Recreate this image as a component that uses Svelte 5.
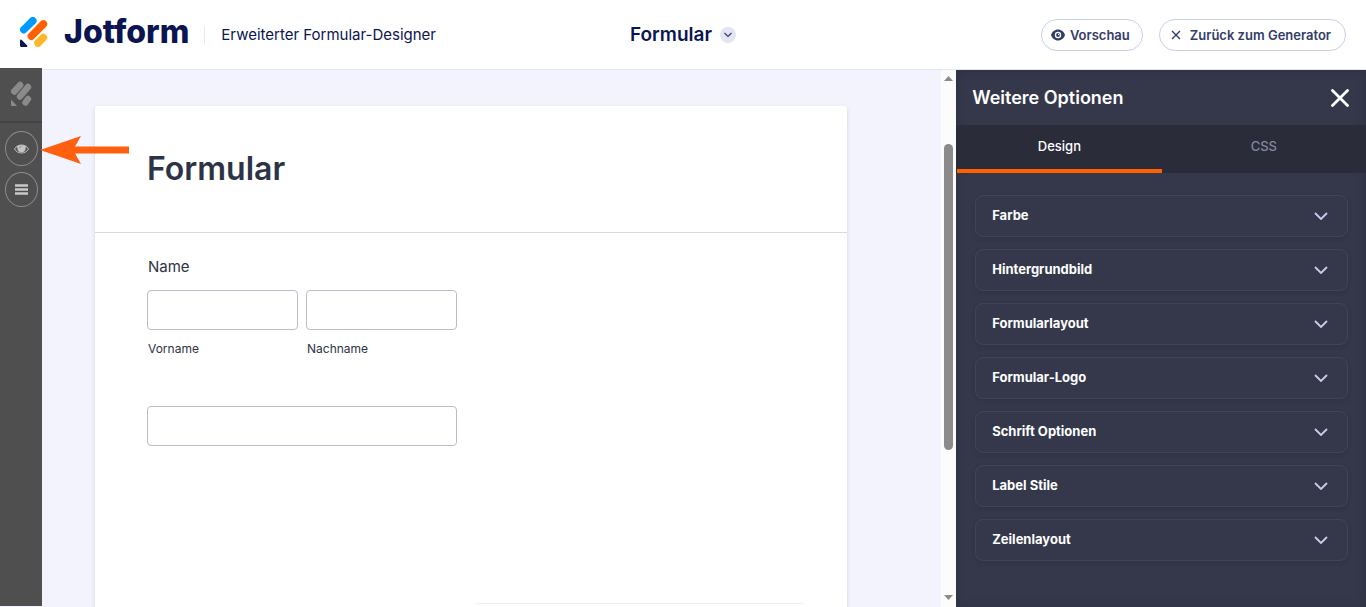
<script lang="ts">
  let activeTab = $state("design");
  let openSection = $state("");
  let firstName = $state("");
  let lastName = $state("");
  let answer = $state("");

  const tabs = [
    { id: "design", label: "Design" },
    { id: "css", label: "CSS" },
  ];

  const sections = [
    "Farbe",
    "Hintergrundbild",
    "Formularlayout",
    "Formular-Logo",
    "Schrift Optionen",
    "Label Stile",
    "Zeilenlayout",
  ];

  const toggleSection = (name: string) => {
    openSection = openSection === name ? "" : name;
  };
</script>

<div class="page">
  <header class="topbar">
    <div class="brand">
      <a class="logo" href="/" aria-label="Jotform">
        <svg width="28" height="30" viewBox="0 0 28 30">
          <g fill="none" stroke-width="7.6" stroke-linecap="round">
            <path d="M3.800 12.600L12.800 3.800" stroke="#0099ff" />
            <path d="M11.400 19.200L23.400 7" stroke="#ff6100" />
            <path d="M18 26L23.400 20.600" stroke="#ffb629" />
          </g>
          <path d="M0 23.500c0-1 .9-1.300 1.500-.7L7.200 28.500c.6.600.2 1.500-.7 1.500H1.500C.6 30 0 29.400 0 28.500z" fill="#0a1551" />
        </svg>
        <span class="wordmark">Jotform</span>
      </a>
      <span class="product">Erweiterter Formular-Designer</span>
    </div>

    <div class="form-name">
      <span>Formular</span>
      <button class="name-toggle" aria-label="Formular wählen">
        <svg width="8" height="6" viewBox="0 0 8 6"><path d="M0.500 1L4 4.500 7.500 1" /></svg>
      </button>
    </div>

    <div class="actions">
      <button class="pill">
        <svg width="14" height="12" viewBox="0 0 14 12">
          <path d="M7 0.500C3.600.5 1.100 2.800 0 6c1.100 3.200 3.600 5.500 7 5.500S12.900 9.200 14 6C12.900 2.800 10.400.5 7 .5z" fill="#343c6a" />
          <circle cx="7" cy="6" r="3.200" fill="#fff" />
          <circle cx="7" cy="6" r="1.900" fill="#343c6a" />
          <circle cx="7.600" cy="5.400" r="0.700" fill="#fff" />
        </svg>
        Vorschau
      </button>
      <button class="pill back">
        <svg width="10" height="10" viewBox="0 0 10 10">
          <path d="M1 1l8 8M9 1L1 9" stroke="#343c6a" stroke-width="1.400" />
        </svg>
        Zurück zum Generator
      </button>
    </div>
  </header>

  <div class="workspace">
    <nav class="rail">
      <a class="rail-logo" href="/" aria-label="Start">
        <svg width="22" height="26" viewBox="0 0 22 26">
          <g fill="none" stroke="#8a8a8a" stroke-width="6.400" stroke-linecap="round">
            <path d="M4.200 10.500L10.200 4" />
            <path d="M10 15.500L18 6" />
            <path d="M15.500 21.500L18 18" />
          </g>
          <path d="M1 18.500l6 6.500H2a1 1 0 0 1-1-1z" fill="#8a8a8a" />
        </svg>
      </a>
      <div class="rail-tools">
        <button class="rail-button" aria-label="Vorschau">
          <svg width="15" height="10" viewBox="0 0 15 10">
            <path d="M0.500 5C3.500 -0.300 11.500 -0.300 14.500 5 11.500 10.300 3.500 10.300 0.500 5z" fill="none" stroke="#c4c4c4" />
            <path d="M3.200 2.200Q7.500 0 11.800 2.200 12 8.200 7.500 8.200 3 8.200 3.200 2.200z" fill="#c4c4c4" />
            <path d="M5.500 4Q6 2.600 7.500 2.500" fill="none" stroke="#777" stroke-width="0.800" />
          </svg>
        </button>
        <button class="rail-button" aria-label="Menü">
          <svg width="13" height="11" viewBox="0 0 13 11">
            <path d="M0 1.500h13M0 5.500h13M0 9.500h13" stroke="#c9c9c9" stroke-width="2.400" />
          </svg>
        </button>
      </div>
      <svg class="pointer" width="90" height="28" viewBox="0 0 90 28">
        <path d="M0 14L41 0 35 10.500H89V17.500H35L41 28z" fill="#ff6010" />
      </svg>
    </nav>

    <main class="canvas">
      <form class="form-card" onsubmit={(e) => e.preventDefault()}>
        <div class="form-head">
          <h1>Formular</h1>
        </div>
        <div class="form-body">
          <fieldset>
            <legend>Name</legend>
            <div class="name-row">
              <div class="field">
                <input id="first" type="text" bind:value={firstName} />
                <label for="first">Vorname</label>
              </div>
              <div class="field">
                <input id="last" type="text" bind:value={lastName} />
                <label for="last">Nachname</label>
              </div>
            </div>
          </fieldset>
          <input class="wide" type="text" aria-label="Antwort" bind:value={answer} />
        </div>
        <hr />
      </form>
    </main>

    <div class="scrollbar" aria-hidden="true">
      <svg width="9" height="5" viewBox="0 0 9 5"><path d="M0 5L4.500 0 9 5z" fill="#8b8b8b" /></svg>
      <div class="track"><div class="thumb"></div></div>
      <svg width="9" height="5" viewBox="0 0 9 5"><path d="M0 0h9L4.500 5z" fill="#8b8b8b" /></svg>
    </div>

    <aside class="panel">
      <div class="panel-head">
        <h2>Weitere Optionen</h2>
        <button class="close" aria-label="Schließen">
          <svg width="18" height="18" viewBox="0 0 18 18">
            <path d="M1.500 1.500l15 15M16.500 1.500l-15 15" stroke="#fff" stroke-width="2.800" stroke-linecap="round" />
          </svg>
        </button>
      </div>
      <div class="tabs" role="tablist">
        {#each tabs as tab (tab.id)}
          <button
            class="tab"
            class:active={activeTab === tab.id}
            role="tab"
            aria-selected={activeTab === tab.id}
            onclick={() => (activeTab = tab.id)}
          >
            {tab.label}
          </button>
        {/each}
      </div>
      <div class="sections">
        {#each sections as name (name)}
          <button class="section" aria-expanded={openSection === name} onclick={() => toggleSection(name)}>
            <span>{name}</span>
            <svg width="14" height="8" viewBox="0 0 14 8"><path d="M1 1l6 6 6-6" /></svg>
          </button>
        {/each}
      </div>
    </aside>
  </div>
</div>

<style>
  :global(body) {
    margin: 0;
  }

  .page {
    display: flex;
    flex-direction: column;
    height: 100vh;
    overflow: hidden;
    background: #f3f3fe;
    font-family: Inter, "Liberation Sans", sans-serif;
  }

  .page :global(*) {
    box-sizing: border-box;
  }

  button {
    margin: 0;
    padding: 0;
    border: 0;
    background: none;
    font: inherit;
    color: inherit;
    cursor: pointer;
  }

  .topbar {
    flex: none;
    display: grid;
    grid-template-columns: 1fr auto 1fr;
    align-items: center;
    height: 70px;
    padding: 0 20px;
    border-bottom: 1px solid #e3e5f5;
    background: #fff;
    color: #0a1551;
  }

  .brand {
    display: flex;
    align-items: center;
    gap: 15px;
  }

  .logo {
    display: flex;
    align-items: center;
    gap: 16px;
    height: 32px;
    padding-bottom: 5px;
    color: #0a1551;
    text-decoration: none;
  }

  .wordmark {
    font-size: 32px;
    font-weight: 800;
    line-height: 32px;
  }

  .product {
    padding-left: 16px;
    border-left: 1px solid #e8e8f2;
    font-size: 15px;
    line-height: 18px;
    white-space: nowrap;
  }

  .form-name {
    display: flex;
    align-items: center;
    gap: 8px;
    font-size: 19px;
    font-weight: 600;
  }

  .name-toggle {
    display: flex;
    align-items: center;
    justify-content: center;
    width: 16px;
    height: 16px;
    border-radius: 50%;
    background: #e3e5f5;
  }

  .name-toggle path {
    fill: none;
    stroke: #343c6a;
    stroke-width: 1.2;
  }

  .actions {
    display: flex;
    justify-content: flex-end;
    gap: 16px;
  }

  .pill {
    display: flex;
    align-items: center;
    gap: 5px;
    height: 32px;
    padding: 0 12px 0 9px;
    border: 1px solid #c8ceed;
    border-radius: 16px;
    color: #343c6a;
    font-size: 13px;
    font-weight: 600;
    white-space: nowrap;
  }

  .back {
    gap: 9px;
    padding: 0 14px 0 11px;
  }

  .workspace {
    flex: 1;
    display: flex;
    min-height: 0;
  }

  .rail {
    position: relative;
    z-index: 1;
    flex: none;
    width: 42px;
    margin: -2px 0 1px;
    background: #4f4f4f;
  }

  .rail-logo {
    display: flex;
    align-items: center;
    justify-content: center;
    height: 55px;
    padding-bottom: 2px;
    border-bottom: 2px solid #444;
  }

  .rail-tools {
    display: flex;
    flex-direction: column;
    align-items: center;
    gap: 6px;
    padding-top: 8px;
  }

  .rail-button {
    display: flex;
    align-items: center;
    justify-content: center;
    width: 33px;
    height: 35px;
    border: 1px solid #8c8c8c;
    border-radius: 50%;
  }

  .pointer {
    position: absolute;
    top: 68px;
    left: 40px;
  }

  .canvas {
    flex: 1;
    display: flex;
    min-width: 0;
    padding: 36px 94px 0 53px;
    overflow: hidden;
  }

  .form-card {
    flex: 1;
    display: flex;
    flex-direction: column;
    border-radius: 3px 3px 0 0;
    background: #fff;
    box-shadow: 0 2px 4px rgba(87, 100, 126, 0.21);
    color: #2c3345;
  }

  .form-head {
    padding: 42px 52px 43px;
    border-bottom: 1px solid #d7d8e1;
  }

  h1 {
    margin: 0;
    font-size: 32px;
    font-weight: 600;
    line-height: 41px;
  }

  .form-body {
    flex: 1;
    padding: 24px 52px 0;
  }

  fieldset {
    margin: 0 0 48px;
    padding: 0;
    border: 0;
  }

  legend {
    padding: 0 1px 13px;
    font-size: 15px;
    line-height: 20px;
  }

  .name-row {
    display: flex;
    gap: 8px;
  }

  .field {
    display: flex;
    flex-direction: column;
    gap: 10px;
    width: 151px;
  }

  .field label {
    padding-left: 1px;
    font-size: 12px;
    line-height: 18px;
  }

  input {
    width: 100%;
    height: 40px;
    padding: 0 10px;
    border: 1px solid #b8bdc9;
    border-radius: 4px;
    background: #fff;
    font: inherit;
    font-size: 15px;
  }

  .wide {
    width: 310px;
  }

  hr {
    width: 328px;
    margin: 0 44px 3px auto;
    border: 0;
    border-top: 1px solid #f0f0fa;
  }

  .scrollbar {
    flex: none;
    display: flex;
    flex-direction: column;
    align-items: center;
    gap: 8px;
    width: 15px;
    padding: 6px 0 7px;
    background: #fcfcfc;
  }

  .track {
    flex: 1;
    width: 9px;
    padding-top: 55px;
  }

  .thumb {
    height: 69%;
    border-radius: 5px;
    background: #8b8b8b;
  }

  .panel {
    flex: none;
    width: 30%;
    background: #34384a;
    box-shadow: inset 0 0 10px rgba(30, 32, 45, 0.3);
    color: #fff;
  }

  .panel-head {
    display: flex;
    align-items: center;
    justify-content: space-between;
    height: 55px;
    padding: 0 17px 0 16px;
  }

  h2 {
    margin: 0;
    font-size: 18px;
    font-weight: 600;
  }

  .close {
    display: flex;
  }

  .tabs {
    display: flex;
    height: 48px;
    padding-left: 1px;
    background: #2a2c3a;
  }

  .tab {
    flex: 1;
    padding-bottom: 3px;
    border-bottom: 4px solid transparent;
    color: #8288a0;
    font-size: 13px;
    font-weight: 500;
  }

  .tab.active {
    border-color: #ff6100;
    color: #fff;
  }

  .sections {
    display: flex;
    flex-direction: column;
    gap: 12px;
    padding: 22px 18px 22px 19px;
  }

  .section {
    display: flex;
    align-items: center;
    justify-content: space-between;
    height: 42px;
    padding: 0 19px 0 16px;
    border: 1px solid #414454;
    border-radius: 8px;
    box-shadow: 0 2px 4px rgba(30, 32, 45, 0.2);
    font-size: 13px;
    font-weight: 700;
  }

  .section span {
    padding-bottom: 2px;
  }

  .section path {
    fill: none;
    stroke: #c8ceed;
    stroke-width: 1.8;
  }
</style>
